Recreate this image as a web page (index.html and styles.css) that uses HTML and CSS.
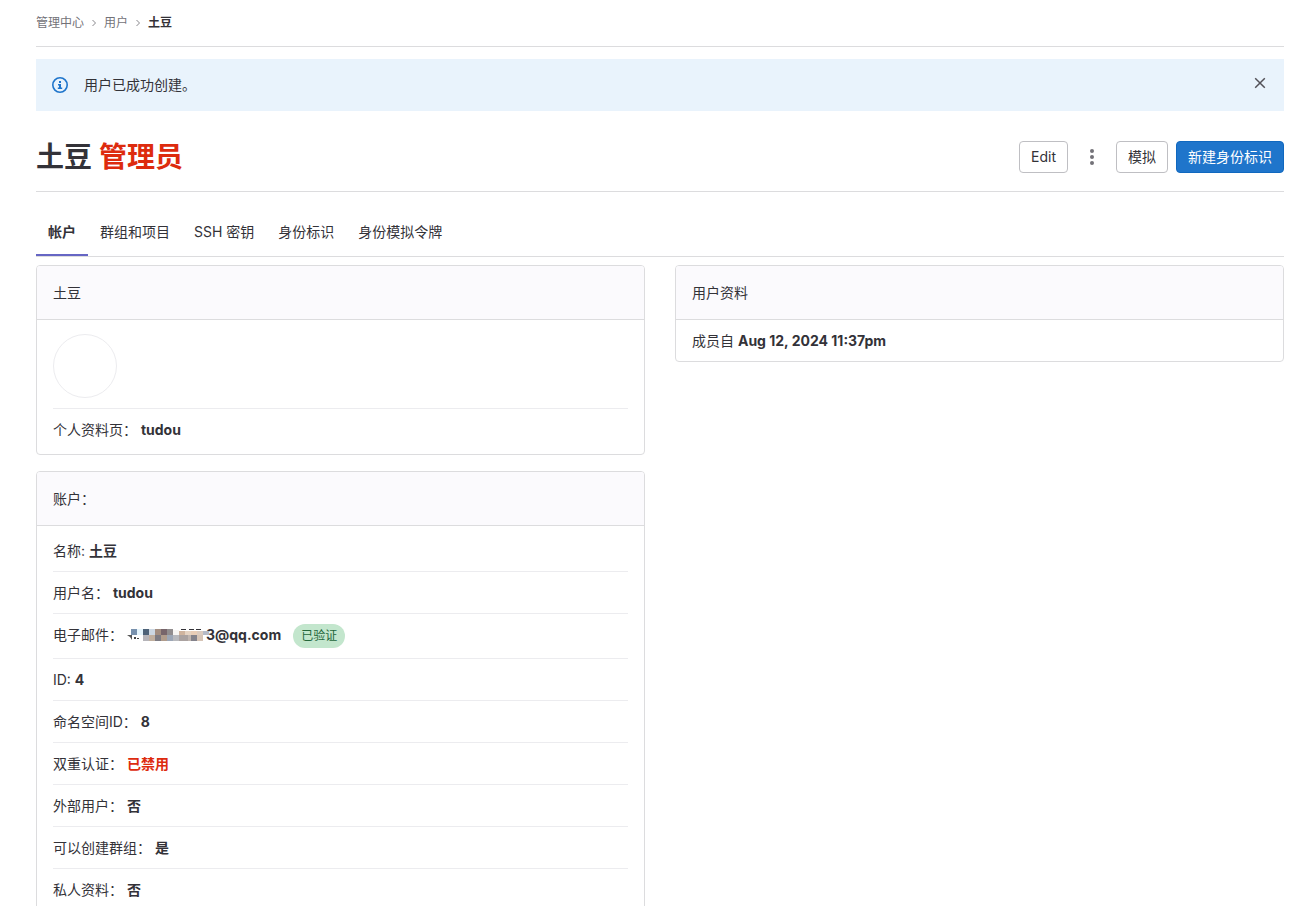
FILE: index.html
```
<!DOCTYPE html>
<html lang="zh-CN">
<head>
  <meta charset="UTF-8" />
  <meta name="viewport" content="width=device-width, initial-scale=1.0"/>
  <title>土豆 · 用户 · 管理中心</title>
  <link rel="stylesheet" href="styles.css">
</head>
<body>
  <div class="page">
    <nav class="breadcrumbs" aria-label="Breadcrumbs">
      <a href="#">管理中心</a>
      <svg class="chevron" width="8" height="8" viewBox="0 0 8 8"><path d="M2.5 1 5.5 4 2.5 7" /></svg>
      <a href="#">用户</a>
      <svg class="chevron" width="8" height="8" viewBox="0 0 8 8"><path d="M2.5 1 5.5 4 2.5 7" /></svg>
      <a class="current" href="#">土豆</a>
    </nav>

    <div class="alert" role="status">
      <svg class="alert-icon" width="16" height="16" viewBox="0 0 16 16">
        <circle cx="8" cy="8" r="7.2" fill="none" stroke="#1f75cb" stroke-width="1.6" />
        <path d="M7 4h2v2H7zM6 7h3v3.5h1.2V12H5.8v-1.500H7V8.400H6z" fill="#1f75cb" />
      </svg>
      <span class="alert-text">用户已成功创建。</span>
      <button class="close" type="button" aria-label="关闭">
        <svg width="16" height="16" viewBox="0 0 16 16"><path d="M3.200 3.200 12.800 12.800M12.800 3.200 3.200 12.800" /></svg>
      </button>
    </div>

    <header class="title-bar">
      <h1>土豆 <span class="danger">管理员</span></h1>
      <div class="actions">
        <button class="btn" type="button">Edit</button>
        <button class="btn btn-icon" type="button" aria-label="更多操作">
          <svg width="16" height="16" viewBox="0 0 16 16"><circle cx="8" cy="2" r="2" /><circle cx="8" cy="8" r="2" /><circle cx="8" cy="14" r="2" /></svg>
        </button>
        <button class="btn" type="button">模拟</button>
        <button class="btn btn-confirm" type="button">新建身份标识</button>
      </div>
    </header>

    <nav class="tabs">
      <a class="active" href="#">帐户</a>
      <a href="#">群组和项目</a>
      <a href="#">SSH 密钥</a>
      <a href="#">身份标识</a>
      <a href="#">身份模拟令牌</a>
    </nav>

    <main class="columns">
      <div class="column">
        <section class="card">
          <div class="card-header">土豆</div>
          <ul class="list">
            <li><div class="avatar"></div></li>
            <li>个人资料页： <a href="#">tudou</a></li>
          </ul>
        </section>

        <section class="card">
          <div class="card-header">账户：</div>
          <ul class="list">
            <li>名称: <strong>土豆</strong></li>
            <li>用户名： <strong>tudou</strong></li>
            <li class="email">
              <span>电子邮件：</span>
              <a href="#">
                <svg class="mosaic" width="82" height="14" viewBox="0 0 82 14" aria-hidden="true">
                  <path d="M0 7h5v5L3 9z" fill="#555" /><path d="M7 9h2v2H7zM10 10h2v1h-2z" fill="#444" />
                  <path d="M54 1h5v1h-5zM62 1h5v1h-5zM69 1h5v1h-5z" fill="#333238" />
                  <g shape-rendering="crispEdges">
                    <path d="M4 1h6v6H4z" fill="#7891ad" /><path d="M10 1h6v6h-6z" fill="#e5f4fb" />
                    <path d="M16 1h6v6h-6z" fill="#4d6278" /><path d="M22 1h6v6h-6z" fill="#ccd7e2" />
                    <path d="M28 1h6v6h-6z" fill="#a28d80" /><path d="M34 1h6v6h-6z" fill="#77656b" />
                    <path d="M40 1h6v6h-6z" fill="#918d8e" /><path d="M46 2h6v5h-6z" fill="#f7f5f2" />
                    <path d="M52 3h6v4h-6z" fill="#cfb49e" /><path d="M58 3h6v4h-6z" fill="#e5d3c2" />
                    <path d="M64 3h6v4h-6z" fill="#e8cdb7" /><path d="M70 3h6v4h-6z" fill="#dbcbbf" />
                    <path d="M76 3h6v4h-6z" fill="#b5bac6" />
                    <path d="M16 7h6v6h-6z" fill="#b5b4b9" /><path d="M22 7h6v6h-6z" fill="#c0af9f" />
                    <path d="M28 7h6v6h-6z" fill="#7d7b82" /><path d="M34 7h6v6h-6z" fill="#b09c8c" />
                    <path d="M40 7h6v6h-6z" fill="#9ca6b5" /><path d="M46 7h6v6h-6z" fill="#b8b9bd" />
                    <path d="M52 7h9v6h-9z" fill="#aaa2a0" /><path d="M61 7h3v6h-3z" fill="#c0b5af" />
                    <path d="M64 7h6v6h-6z" fill="#83828b" /><path d="M70 7h6v6h-6z" fill="#d6c4b6" />
                  </g>
                </svg>3@qq.com</a>
              <span class="badge">已验证</span>
            </li>
            <li>ID: <strong>4</strong></li>
            <li>命名空间ID： <strong>8</strong></li>
            <li>双重认证： <strong class="danger">已禁用</strong></li>
            <li>外部用户： <strong>否</strong></li>
            <li>可以创建群组： <strong>是</strong></li>
            <li>私人资料： <strong>否</strong></li>
          </ul>
        </section>
      </div>

      <div class="column">
        <section class="card">
          <div class="card-header">用户资料</div>
          <ul class="list list-flush">
            <li>成员自 <strong>Aug 12, 2024 11:37pm</strong></li>
          </ul>
        </section>
      </div>
    </main>
  </div>
</body>
</html>
```
FILE: styles.css
```
* {
  box-sizing: border-box;
}

body {
  margin: 0;
  font-family: Inter, "Noto Sans CJK SC", sans-serif;
  font-size: 14px;
  line-height: 21px;
  color: #333238;
  background: #fff;
}

a {
  color: inherit;
  text-decoration: none;
}

a:hover {
  text-decoration: underline;
}

.page {
  height: 100vh;
  overflow: hidden;
  padding: 0 28px 0 36px;
}

.danger {
  color: #dd2b0e;
}

/* Breadcrumbs */
.breadcrumbs {
  display: flex;
  align-items: center;
  gap: 6px;
  height: 47px;
  border-bottom: 1px solid #dcdcde;
  font-size: 12px;
  line-height: 16px;
  color: #737278;
}

.breadcrumbs .current {
  font-weight: 600;
  color: #333238;
}

.chevron {
  fill: none;
  stroke: #89888d;
  stroke-width: 1;
}

/* Alert */
.alert {
  display: flex;
  align-items: center;
  margin-top: 12px;
  padding: 16px;
  background: #e9f3fc;
  line-height: 20px;
}

.alert-icon {
  margin-right: 16px;
}

.alert-text {
  flex: 1;
}

.close {
  display: flex;
  align-self: flex-start;
  padding: 0;
  border: none;
  background: transparent;
  cursor: pointer;
}

.close path {
  fill: none;
  stroke: #535158;
  stroke-width: 1.5;
}

/* Title and buttons */
.title-bar {
  display: flex;
  align-items: center;
  justify-content: space-between;
  padding: 30px 0 18px;
  border-bottom: 1px solid #dcdcde;
}

h1 {
  margin: 0;
  font-size: 28px;
  line-height: 32px;
  font-weight: 600;
}

.actions {
  display: flex;
  gap: 8px;
}

.btn {
  display: flex;
  align-items: center;
  justify-content: center;
  min-width: 32px;
  height: 32px;
  padding: 0 11px;
  border: 1px solid #bfbfc3;
  border-radius: 4px;
  background: #fff;
  color: #333238;
  font-family: inherit;
  font-size: 14px;
  line-height: 16px;
  cursor: pointer;
}

.btn-icon {
  padding: 0;
  border-color: transparent;
  background: transparent;
}

.btn-icon svg {
  fill: #737278;
}

.btn-confirm {
  border-color: #1068bf;
  background: #1f75cb;
  color: #fff;
}

/* Tabs */
.tabs {
  display: flex;
  margin-top: 16px;
  border-bottom: 1px solid #dcdcde;
}

.tabs a {
  padding: 16px 12px;
  line-height: 16px;
}

.tabs .active {
  font-weight: 600;
  box-shadow: inset 0 -2px 0 #6666c4;
}

/* Cards */
.columns {
  display: grid;
  grid-template-columns: 1fr 1fr;
  gap: 30px;
  margin-top: 8px;
}

.card {
  margin-bottom: 16px;
  border: 1px solid #dcdcde;
  border-radius: 4px;
}

.card-header {
  padding: 16px;
  border-bottom: 1px solid #dcdcde;
  border-radius: 3px 3px 0 0;
  background: #fbfafd;
}

.list {
  margin: 0;
  padding: 4px 16px;
  list-style: none;
}

.list-flush {
  padding: 0 16px;
}

.list li {
  padding: 10px 0;
  border-bottom: 1px solid #ececef;
}

.list li:last-child {
  border-bottom: none;
}

.list a,
.list strong {
  font-weight: 700;
}

.avatar {
  width: 64px;
  height: 64px;
  border: 1px solid #ececef;
  border-radius: 50%;
}

.email {
  display: flex;
  align-items: flex-start;
}

.email a {
  display: flex;
  align-items: center;
  margin: 0 12px 0 4px;
}

/* Covers the start of the first visible digit */
.mosaic {
  position: relative;
  margin-right: -3px;
}

.badge {
  padding: 4px 8px;
  border-radius: 12px;
  background: #c3e6cd;
  color: #24663b;
  font-size: 12px;
  line-height: 16px;
}
```
